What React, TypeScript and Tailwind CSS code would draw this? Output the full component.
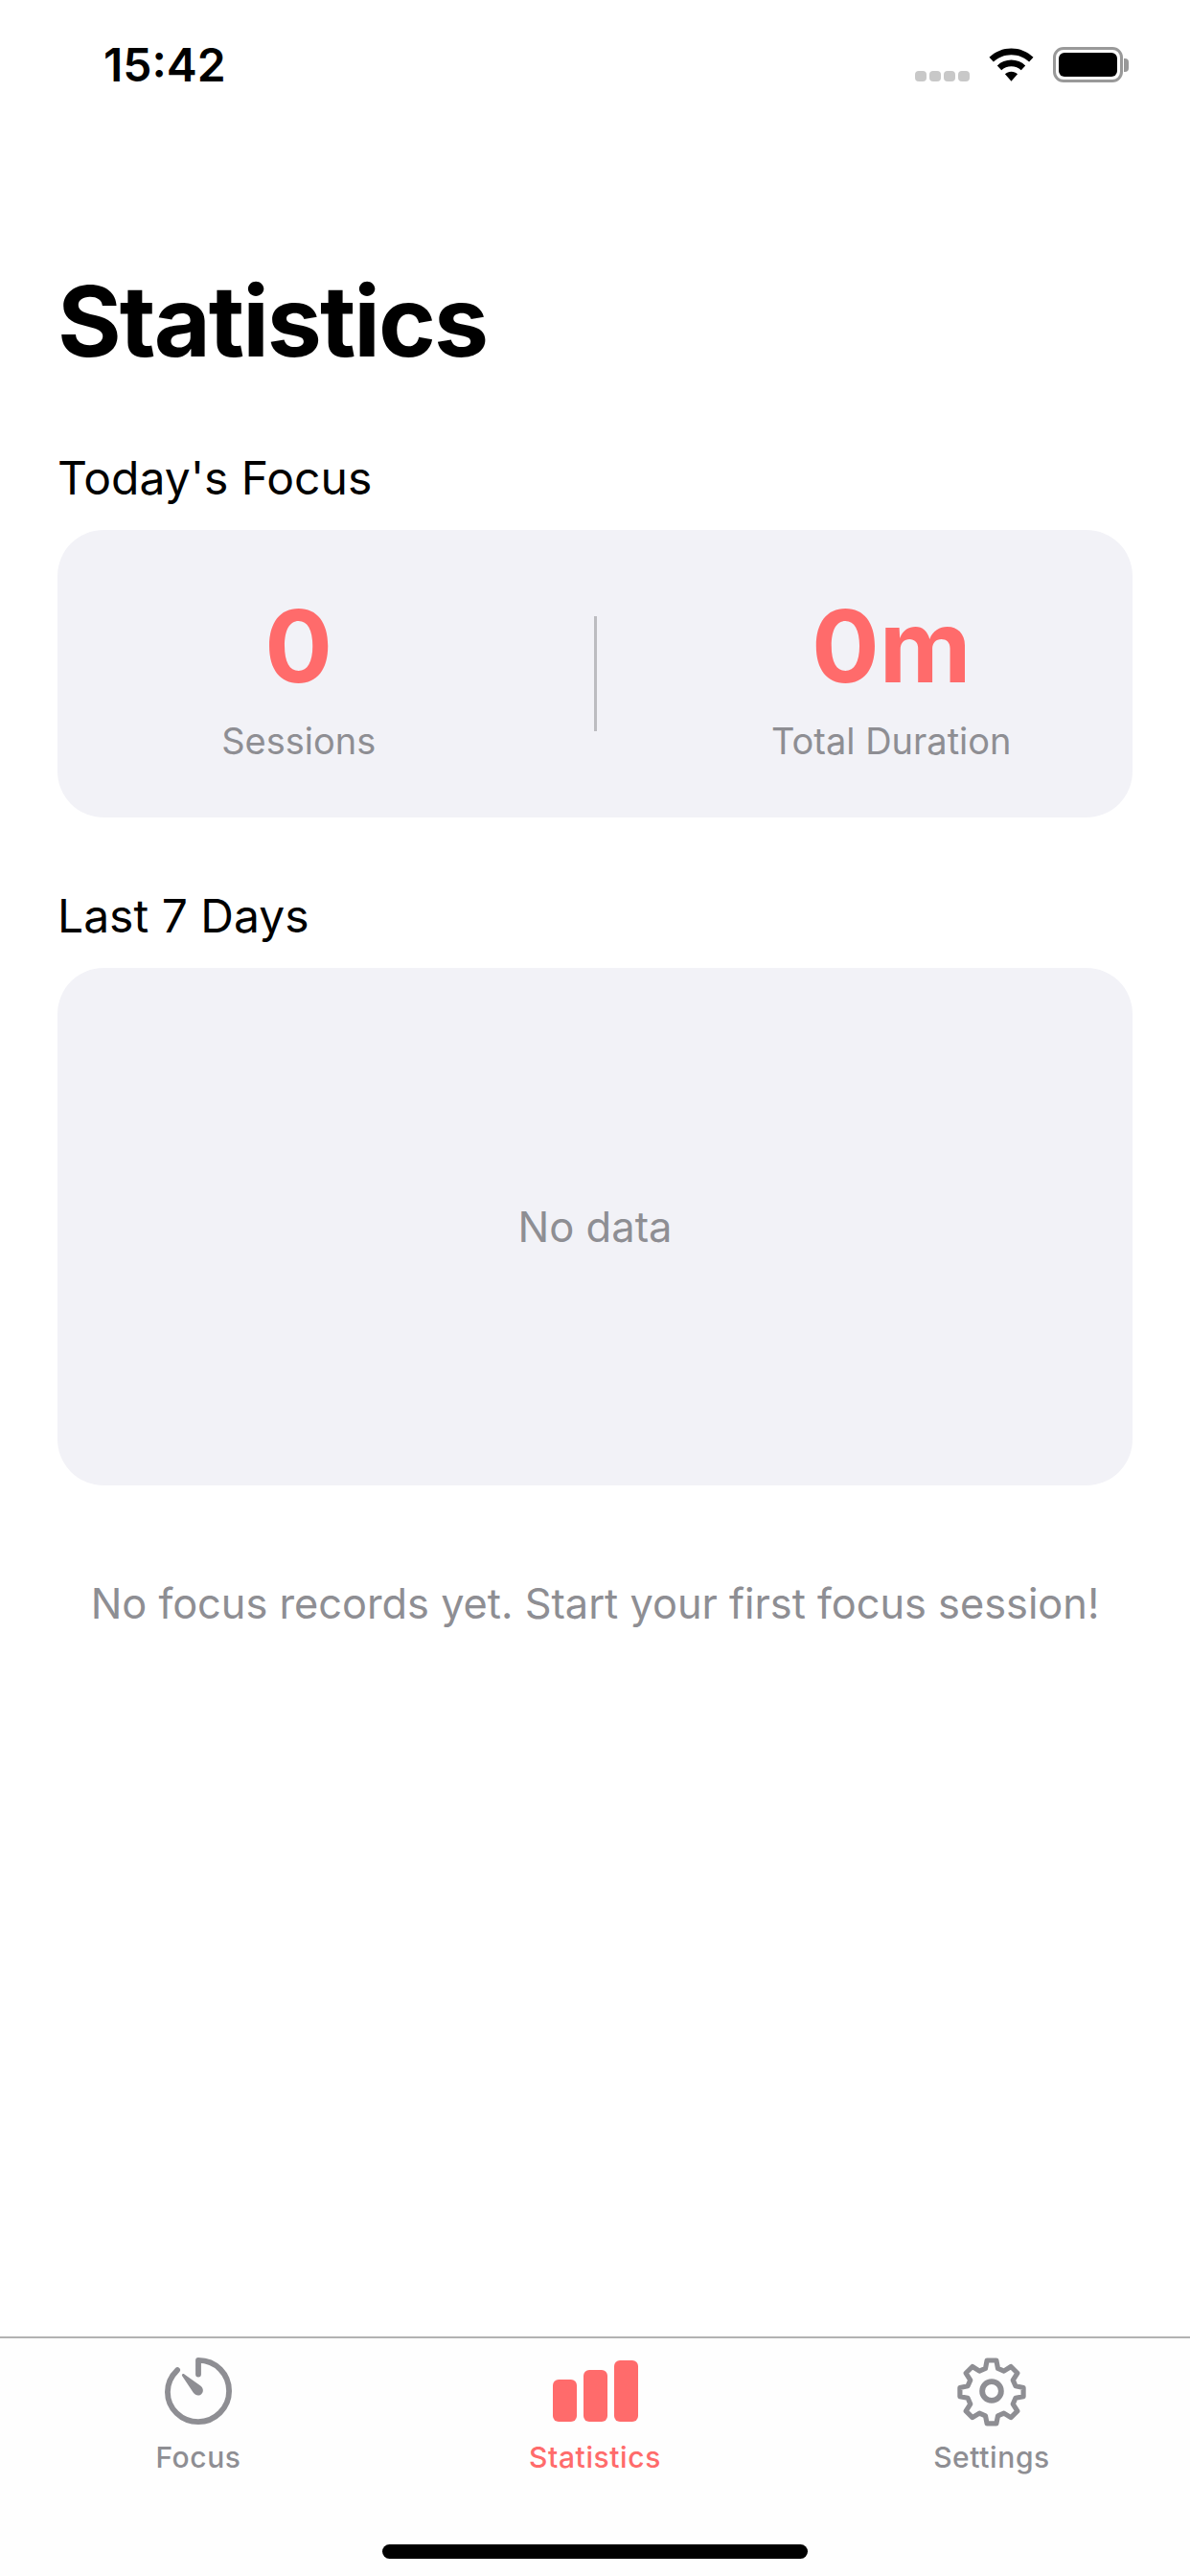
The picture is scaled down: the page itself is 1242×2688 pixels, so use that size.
import React from 'react';

const font = { fontFamily: 'Inter, sans-serif' };

const WifiIcon = () => (
  <svg width="47" height="36" viewBox="0 0 48 36" fill="none">
    <path d="M24 0C15 0 7 3.400 0.500 9.500L5 14.500C10 9.800 16.700 7 24 7C31.300 7 38 9.800 43 14.500L47.500 9.500C41 3.400 33 0 24 0Z" fill="#000" />
    <path d="M24 12.500C18.300 12.500 13 14.700 9 18.400L13.500 23.300C16.300 20.800 20 19.300 24 19.300C28 19.300 31.700 20.800 34.500 23.300L39 18.400C35 14.700 29.700 12.500 24 12.500Z" fill="#000" />
    <path d="M24 25C21.400 25 19.100 26 17.300 27.500L24 35L30.700 27.500C28.900 26 26.600 25 24 25Z" fill="#000" />
  </svg>
);

const FocusIcon = () => (
  <svg width="70" height="70" viewBox="0 0 72 72" fill="none">
    <path d="M13.500 13.500C7 19.800 3 28 3 37C3 55 18 69 36 69C54 69 69 54 69 36C69 18 55 3 36 3V18" stroke="#8e8e93" strokeWidth="6" strokeLinecap="round" strokeLinejoin="round" />
    <path d="M18.500 19.500C18 18 19.500 17 21 18L38 30C41.500 32.500 42 36.500 39.500 39C37 41.500 33 41 30.500 37.500L18.500 19.500Z" fill="#8e8e93" />
  </svg>
);

const BarsIcon = () => (
  <div className="flex items-end gap-[7px] h-[64px]">
    <div className="w-[25px] h-[44px] rounded-[6px] bg-[#ff6b6b]" />
    <div className="w-[25px] h-[54px] rounded-[6px] bg-[#ff6b6b]" />
    <div className="w-[25px] h-[64px] rounded-[6px] bg-[#ff6b6b]" />
  </div>
);

const GearIcon = () => (
  <svg width="74" height="74" viewBox="0 0 24 24" fill="none" stroke="#8e8e93" strokeWidth="1.900" strokeLinecap="round" strokeLinejoin="round">
    <path d="M10.200 1.400h3.600l.6 3.100 2.300 1 2.700-1.700 2.500 2.500-1.700 2.700 1 2.300 3 .6v3.400l-3 .6-1 2.300 1.700 2.700-2.500 2.500-2.700-1.700-2.300 1-.6 3h-3.600l-.6-3-2.300-1-2.700 1.700-2.500-2.500 1.700-2.700-1-2.300-3-.6v-3.400l3-.6 1-2.300-1.700-2.700 2.500-2.500 2.700 1.700 2.300-1z" transform="translate(12 12) scale(.88) translate(-12 -13.200)" />
    <circle cx="12" cy="12" r="3.200" />
  </svg>
);

const tabs = [
  { label: 'Focus', icon: <FocusIcon />, active: false },
  { label: 'Statistics', icon: <BarsIcon />, active: true },
  { label: 'Settings', icon: <GearIcon />, active: false },
];

export default function App() {
  return (
    <div className="w-[1242px] h-[2688px] bg-white flex flex-col overflow-hidden" style={font}>
      {/* Status bar */}
      <div className="h-[132px] flex items-start justify-between pl-[108px] pr-[64px] pt-[44px] shrink-0">
        <span className="text-[48px] leading-[48px] font-semibold text-black">15:42</span>
        <div className="flex items-end gap-[20px] pt-[5px]">
          <div className="flex gap-[3px] mb-[1px]">
            {[0, 1, 2, 3].map((i) => (
              <div key={i} className="w-[12px] h-[11px] rounded-[4px] bg-[#c8c8c8]" />
            ))}
          </div>
          <WifiIcon />
          <div className="flex items-center gap-[1px]">
            <div className="w-[73px] h-[37px] rounded-[11px] border-[3px] border-[#999999] p-[3px]">
              <div className="w-full h-full rounded-[6px] bg-black" />
            </div>
            <div className="w-[5px] h-[14px] rounded-r-[4px] bg-[#999999]" />
          </div>
        </div>
      </div>

      <main className="flex-1 px-[60px]">
        <h1 className="mt-[143px] text-[102px] leading-[120px] font-bold text-black tracking-[-2px]">Statistics</h1>

        <h2 className="mt-[73px] text-[48px] leading-[62px] font-normal text-black">Today's Focus</h2>
        <section className="mt-[23px] h-[300px] rounded-[48px] bg-[#f2f2f7] flex items-center gap-[116px] px-[60px] pt-[5px]">
          <div className="flex-1 flex flex-col items-center">
            <span className="text-[105px] leading-[118px] font-bold text-[#ff6b6b]">0</span>
            <span className="mt-[16px] text-[38px] leading-[48px] text-[#8e8e93]">Sessions</span>
          </div>
          <div className="w-[3px] h-[120px] mb-[5px] bg-[#bcbcc0]" />
          <div className="flex-1 flex flex-col items-center">
            <span className="text-[105px] leading-[118px] font-bold text-[#ff6b6b]">0m</span>
            <span className="mt-[16px] text-[38px] leading-[48px] text-[#8e8e93]">Total Duration</span>
          </div>
        </section>

        <h2 className="mt-[72px] text-[48px] leading-[62px] font-normal text-black">Last 7 Days</h2>
        <section className="mt-[23px] h-[540px] rounded-[48px] bg-[#f2f2f7] flex items-center justify-center">
          <span className="text-[43.500px] leading-[54px] text-[#8e8e93]">No data</span>
        </section>

        <p className="mt-[96px] text-center text-[43.300px] leading-[54px] text-[#8e8e93]">No focus records yet. Start your first focus session!</p>
      </main>

      {/* Tab bar */}
      <nav className="h-[250px] shrink-0 border-t-[2px] border-[#b2b2b2] bg-[#fefefe] flex flex-col">
        <div className="flex">
          {tabs.map((t) => (
            <div key={t.label} className="flex-1 flex flex-col items-center pt-[18px]">
              <div className="h-[74px] flex items-center justify-center">{t.icon}</div>
              <span className={`mt-[14px] text-[30px] leading-[36px] font-medium tracking-[0.6px] ${t.active ? 'text-[#ff6b6b]' : 'text-[#8e8e93]'}`}>
                {t.label}
              </span>
            </div>
          ))}
        </div>
        <div className="mt-auto mb-[18px] mx-auto w-[444px] h-[15px] rounded-full bg-black" />
      </nav>
    </div>
  );
}
